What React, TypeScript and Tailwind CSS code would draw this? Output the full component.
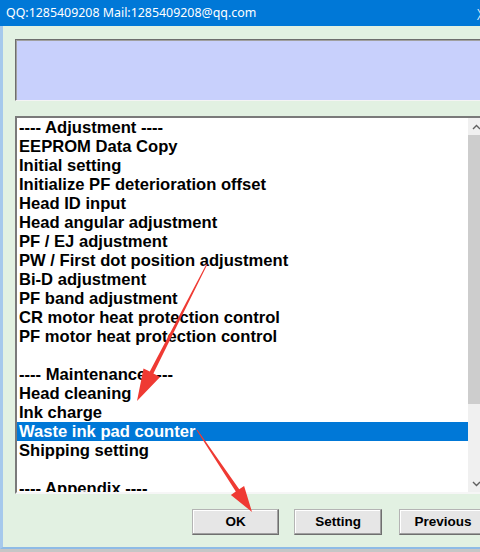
import React from "react";

const rows: string[] = [
  "---- Adjustment ----",
  "EEPROM Data Copy",
  "Initial setting",
  "Initialize PF deterioration offset",
  "Head ID input",
  "Head angular adjustment",
  "PF / EJ adjustment",
  "PW / First dot position adjustment",
  "Bi-D adjustment",
  "PF band adjustment",
  "CR motor heat protection control",
  "PF motor heat protection control",
  "",
  "---- Maintenance ----",
  "Head cleaning",
  "Ink charge",
  "Waste ink pad counter",
  "Shipping setting",
  "",
  "---- Appendix ----",
];

const selected = 16;

function Chevron({ down }: { down?: boolean }) {
  return (
    <svg width="9" height="6" viewBox="0 0 9 6" className={down ? "rotate-180" : ""}>
      <path d="M1 5 L4.5 1.5 L8 5" fill="none" stroke="#606060" strokeWidth="1.4" />
    </svg>
  );
}

function Scrollbar() {
  return (
    <div className="flex w-[17px] shrink-0 flex-col bg-[#f0f0f0]">
      <div className="flex h-[17px] items-center justify-center">
        <Chevron />
      </div>
      <div className="h-[269px] bg-[#cdcdcd]" />
      <div className="flex-1" />
      <div className="flex h-[17px] items-center justify-center">
        <Chevron down />
      </div>
    </div>
  );
}

function WinButton({ label, className = "" }: { label: string; className?: string }) {
  return (
    <button
      className={`h-[26px] w-[87px] border border-t-[#b4b4b4] border-l-[#b4b4b4] border-r-[#6f6f6f] border-b-[#6f6f6f] bg-[#e6e6e6] text-[13.5px] font-bold text-black shadow-[inset_-1px_-1px_0_#a0a0a0,inset_1px_1px_0_#ffffff] ${className}`}
      style={{ fontFamily: '"Liberation Sans", Arial, sans-serif' }}
    >
      {label}
    </button>
  );
}

// red callout arrows drawn over the dialog
function Arrows() {
  return (
    <svg className="pointer-events-none absolute left-0 top-0" width="480" height="552">
      <polygon
        points="207.4,264.2 206.6,263.8 149.8,371.6 143.5,368.4 137,401 160.1,377.1 153.4,373.4"
        fill="#ef3a33"
      />
      <polygon
        points="197.4,429.7 196.6,430.3 235.8,491.5 230.9,494.9 252,512 244.1,485.9 239.2,489.3"
        fill="#ef3a33"
      />
    </svg>
  );
}

export default function App() {
  return (
    <div className="relative h-[552px] w-[480px] overflow-hidden bg-[#c6c6c6]">
      <div className="w-[500px]">
        {/* title bar */}
        <div className="relative flex h-[26px] items-center bg-[#0078d7] pl-[6px] text-white">
          <span className="text-[12.4px]" style={{ fontFamily: '"Noto Sans", "Noto Sans CJK SC", sans-serif' }}>
            QQ:1285409208 Mail:1285409208@qq.com
          </span>
          <span className="absolute left-[477px] top-[4px] text-[14px] font-light" style={{ fontFamily: '"Noto Sans", sans-serif' }}>
            X
          </span>
        </div>

        {/* dialog body */}
        <div className="flex h-[523px] flex-col border-b-2 border-l-[3px] border-b-[#8ebbe6] border-l-[#a6c9ec] bg-[#e2f1e2] pb-[12px] pl-[12px] pr-[13px] pt-[13px]">
          <div className="h-[62px] border border-b-[#f4f4f4] border-l-[#6e6e6e] border-r-[#f4f4f4] border-t-[#6e6e6e] bg-[#c8d0fc] shadow-[inset_1px_1px_0_#a0a0a0]" />

          <div className="mt-[15px] flex h-[378px] border-2 border-b-[#f6f6f6] border-l-[#7a7a7a] border-r-[#f6f6f6] border-t-[#7a7a7a] bg-white">
            <div
              className="flex-1 overflow-hidden text-[16.6px] font-bold leading-[19px] text-black"
              style={{ fontFamily: '"Liberation Sans", Arial, sans-serif' }}
            >
              {rows.map((r, i) => (
                <div
                  key={i}
                  className={`h-[19px] whitespace-nowrap pl-[2px] ${i === selected ? "bg-[#0078d7] text-white" : ""}`}
                >
                  {r}
                </div>
              ))}
            </div>
            <Scrollbar />
          </div>

          <div className="mt-[15px] flex justify-end">
            <WinButton label="OK" />
            <WinButton label="Setting" className="ml-[15px] w-[88px]" />
            <WinButton label="Previous" className="ml-[17px] w-[88px]" />
          </div>
        </div>
      </div>
      <Arrows />
    </div>
  );
}
